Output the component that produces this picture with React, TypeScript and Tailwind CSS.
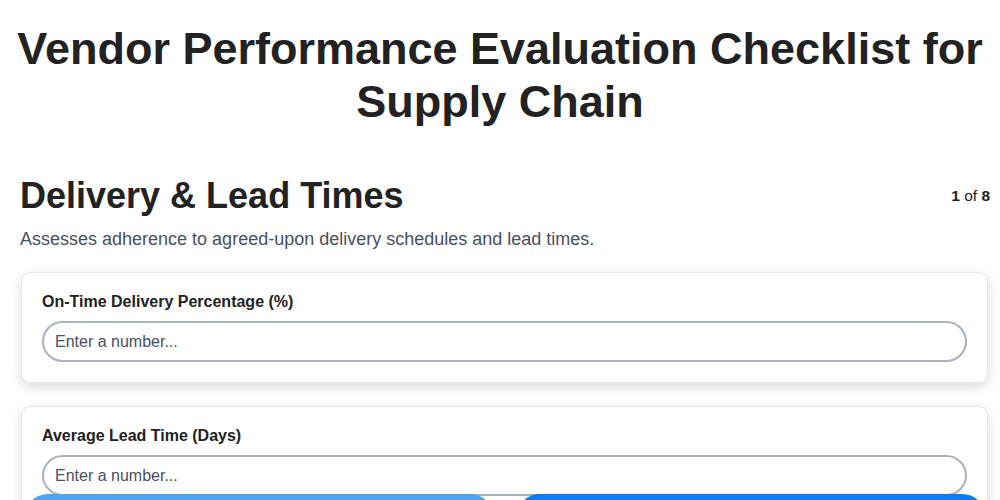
import React from 'react'

const fields = [
  { label: 'On-Time Delivery Percentage (%)' },
  { label: 'Average Lead Time (Days)' },
]

function FieldCard({ label }: { label: string }) {
  return (
    <div className="bg-white border border-[#e6e6ec] rounded-[9px] shadow-[0_4px_12px_rgba(0,0,0,0.14)] px-[20px] pt-[19px] pb-[20px]">
      <label className="block text-[16px] font-bold text-[#222] leading-[20px] mb-[9px]">{label}</label>
      <input
        type="number"
        placeholder="Enter a number..."
        className="w-full h-[41px] rounded-full border-2 border-[#aab2ba] px-[11px] text-[16px] text-[#222] placeholder:text-[#4b5060] outline-none bg-white"
      />
    </div>
  )
}

export default function App() {
  return (
    <div className="min-h-screen bg-white font-['Liberation_Sans',Arial,sans-serif] text-[#222]">
      <h1 className="text-center text-[45px] font-bold leading-[53px] pt-[22px] px-4 text-[#222]">
        Vendor Performance Evaluation Checklist for Supply Chain
      </h1>

      <div className="pl-[21px] pr-[10px] mt-[46px]">
        <div className="flex items-center justify-between">
          <h2 className="text-[36px] font-bold leading-[44px] text-[#222] -ml-[1px]">Delivery &amp; Lead Times</h2>
          <div className="text-[15.5px] text-[#222]">
            <span className="font-bold">1</span> of <span className="font-bold">8</span>
          </div>
        </div>
        <p className="text-[18px] text-[#4a5060] mt-[8px] -ml-[1px]">
          Assesses adherence to agreed-upon delivery schedules and lead times.
        </p>

        <div className="flex flex-col gap-[23px] mt-[19px] pr-[2px] pb-[80px]">
          {fields.map(f => (
            <FieldCard key={f.label} label={f.label} />
          ))}
        </div>
      </div>

      <div className="fixed left-[24px] right-[14px] bottom-[-56px] flex gap-[22px]">
        <button className="flex-1 h-[62px] rounded-[24px] bg-[#4ea2f8] text-white font-bold">Previous</button>
        <button className="flex-1 h-[62px] rounded-[24px] bg-[#0a7cf8] text-white font-bold">Next</button>
      </div>
    </div>
  )
}
